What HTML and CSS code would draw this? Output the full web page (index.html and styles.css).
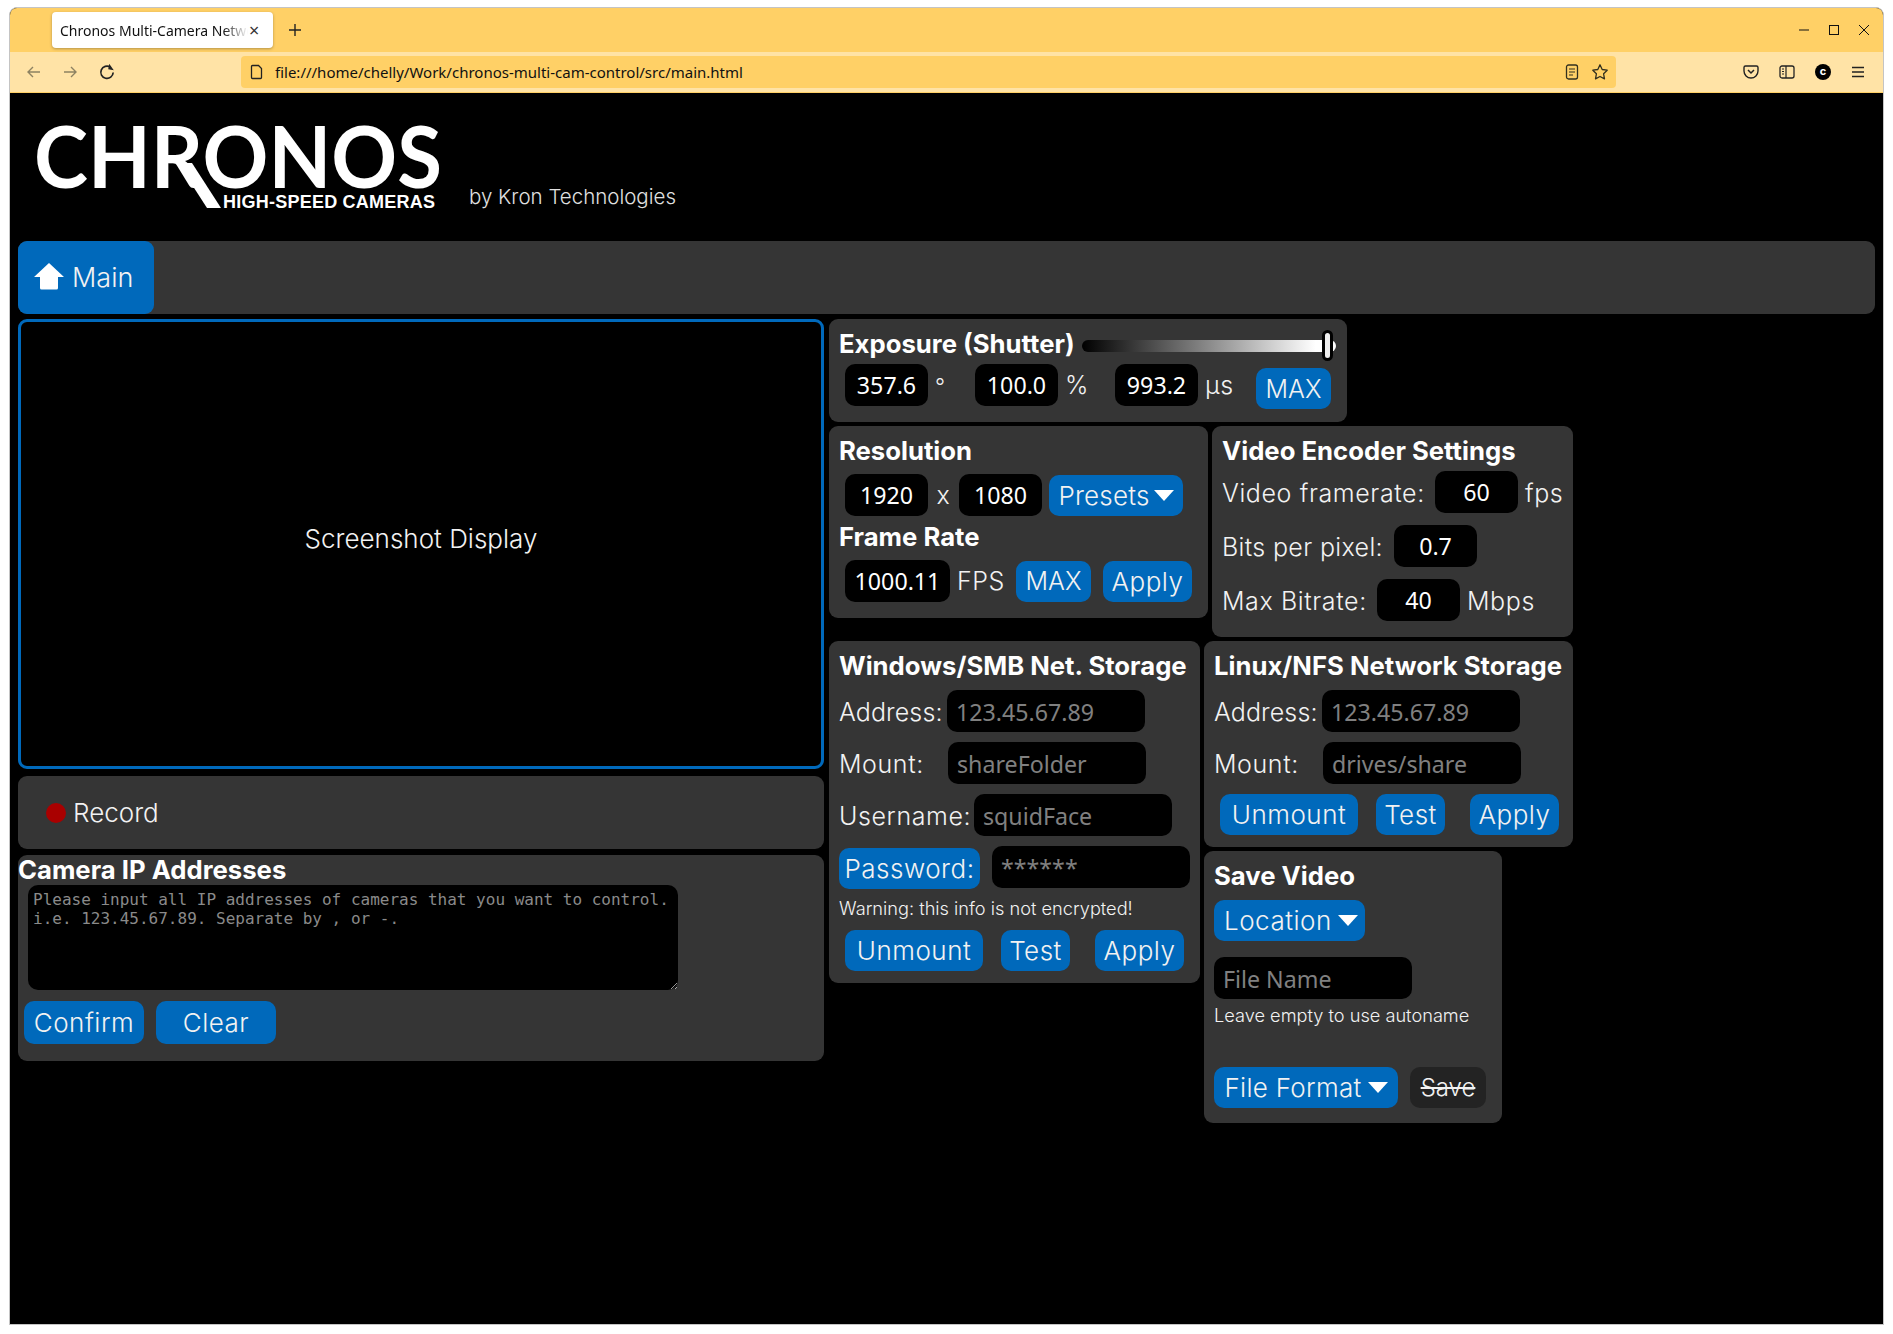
FILE: index.html
```html
<!DOCTYPE html>
<html>
<head>
<meta charset="utf-8">
<title>Chronos Multi-Camera Network Control</title>
<link rel="stylesheet" href="styles.css">
</head>
<body>
<div class="window">

<div class="tabStrip">
	<div class="tab"><span class="tabTitle">Chronos Multi-Camera Network Control</span><span class="tabClose">×</span></div>
	<svg class="newTab" width="14" height="14" viewBox="0 0 14 14"><path d="M7 1v12M1 7h12" stroke="#222" stroke-width="1.4"/></svg>
	<div class="windowControls">
		<svg width="12" height="12" viewBox="0 0 12 12"><path d="M1 6h10" stroke="#111" stroke-width="1"/></svg>
		<svg width="12" height="12" viewBox="0 0 12 12"><rect x="1.5" y="1.5" width="9" height="9" fill="none" stroke="#111"/></svg>
		<svg width="12" height="12" viewBox="0 0 12 12"><path d="M1 1l10 10M11 1L1 11" stroke="#111"/></svg>
	</div>
</div>

<div class="toolbar">
	<div class="navButtons">
		<svg width="16" height="16" viewBox="0 0 16 16"><path d="M14 8H2M7 3L2 8l5 5" fill="none" stroke="#8d8262" stroke-width="1.4"/></svg>
		<svg width="16" height="16" viewBox="0 0 16 16"><path d="M2 8h12M9 3l5 5-5 5" fill="none" stroke="#8d8262" stroke-width="1.4"/></svg>
		<svg width="18" height="18" viewBox="0 0 16 16"><path d="M13.5 8.5A5.5 5.5 0 1 1 11 3.6" fill="none" stroke="#222" stroke-width="1.5"/><path d="M9.5 1v5h5z" fill="#222" transform="rotate(10 12 3.5)"/></svg>
	</div>
	<div class="urlBar">
		<svg width="14" height="16" viewBox="0 0 14 16"><path d="M2.5 1.5h6l3 3v9a1 1 0 0 1-1 1h-8a1 1 0 0 1-1-1v-11a1 1 0 0 1 1-1z" fill="none" stroke="#222" stroke-width="1.3"/></svg>
		<span class="url">file:///home/chelly/Work/chronos-multi-cam-control/src/main.html</span>
		<svg class="urlIcon" width="14" height="16" viewBox="0 0 14 16"><rect x="1.5" y="1" width="11" height="14" rx="2" fill="none" stroke="#33301f" stroke-width="1.3"/><path d="M4 5h6M4 8h6M4 11h4" stroke="#33301f" stroke-width="1.2"/></svg>
		<svg width="18" height="18" viewBox="0 0 18 18"><path d="M9 1.8l2.2 4.7 5 .7-3.6 3.6.9 5.1L9 13.5l-4.5 2.4.9-5.1-3.6-3.6 5-.7z" fill="none" stroke="#33301f" stroke-width="1.3" stroke-linejoin="round"/></svg>
	</div>
	<div class="toolIcons">
		<svg width="16" height="16" viewBox="0 0 16 16"><path d="M2.5 2h11a1.5 1.5 0 0 1 1.5 1.5V7a7 7 0 0 1-14 0V3.500A1.500 1.500 0 0 1 2.500 2z" fill="none" stroke="#222" stroke-width="1.400"/><path d="M5 6l3 3 3-3" fill="none" stroke="#222" stroke-width="1.500"/></svg>
		<svg width="16" height="14" viewBox="0 0 16 14"><rect x="1" y="1" width="14" height="12" rx="2" fill="none" stroke="#222" stroke-width="1.300"/><path d="M7 1v12M3 4h2M3 6.500h2M3 9h2" stroke="#222" stroke-width="1.200"/></svg>
		<span class="avatar">c</span>
		<svg width="14" height="12" viewBox="0 0 14 12"><path d="M1 1.500h12M1 6h12M1 10.500h12" stroke="#222" stroke-width="1.300"/></svg>
	</div>
</div>

<div class="page">

	<div class="header">
		<svg class="logo" width="420" height="100" viewBox="0 0 420 100">
			<text class="logoName" x="0" y="74" textLength="408" lengthAdjust="spacingAndGlyphs">CHRONOS</text>
			<path d="M144 49h14l29 45h-14z" fill="#fff"/>
			<text class="logoSub" x="189" y="94" textLength="212" lengthAdjust="spacing">HIGH-SPEED CAMERAS</text>
		</svg>
		<span class="byline">by Kron Technologies</span>
	</div>

	<div class="navBar">
		<div class="navTab">
			<svg width="30" height="28" viewBox="0 0 30 28"><path d="M15 1L30 15h-6v11a1.500 1.500 0 0 1-1.500 1.500h-15A1.500 1.500 0 0 1 6 26V15H0z" fill="#fff"/></svg>
			<span>Main</span>
		</div>
	</div>

	<div class="columns">

		<div class="leftColumn">
			<div class="screenshot">Screenshot Display</div>
			<div class="recordBar"><span class="recordDot"></span>Record</div>
			<div class="cameraPanel">
				<h2 class="cameraTitle">Camera IP Addresses</h2>
				<textarea class="ipList" placeholder="Please input all IP addresses of cameras that you want to control.&#10;i.e. 123.45.67.89. Separate by , or -."></textarea>
				<div class="cameraButtons">
					<button class="btn wide">Confirm</button>
					<button class="btn wide">Clear</button>
				</div>
			</div>
		</div>

		<div class="rightColumn">

			<div class="panel exposure">
				<div class="titleRow">
					<h2>Exposure (Shutter)</h2>
					<div class="slider"><span class="thumb"></span></div>
				</div>
				<div class="exposureRow">
					<div class="field"><input class="num" value="357.6"><span class="degree">°</span></div>
					<div class="field"><input class="num" value="100.0"><span>%</span></div>
					<div class="field"><input class="num" value="993.2"><span>µs</span></div>
					<button class="btn max">MAX</button>
				</div>
			</div>

			<div class="panelRow">
				<div class="panel resolution">
					<h2>Resolution</h2>
					<div class="row indent">
						<input class="num" value="1920"><span class="times">x</span><input class="num" value="1080">
						<button class="btn presets">Presets<span class="caret"></span></button>
					</div>
					<h2>Frame Rate</h2>
					<div class="row indent">
						<input class="num fps" value="1000.11"><span class="fpsLabel">FPS</span>
						<button class="btn max">MAX</button>
						<button class="btn apply">Apply</button>
					</div>
				</div>

				<div class="panel encoder">
					<h2>Video Encoder Settings</h2>
					<div class="encRow first"><label class="rateLabel">Video framerate:</label><input class="num" value="60"><span>fps</span></div>
					<div class="encRow"><label class="bitsLabel">Bits per pixel:</label><input class="num" value="0.7"></div>
					<div class="encRow"><label class="maxLabel">Max Bitrate:</label><input class="num" value="40"><span>Mbps</span></div>
				</div>
			</div>

			<div class="panelRow">
				<div class="panel smb">
					<h2>Windows/SMB Net. Storage</h2>
					<div class="formRow"><label class="addr">Address:</label><input class="text" placeholder="123.45.67.89"></div>
					<div class="formRow"><label class="mount">Mount:</label><input class="text" placeholder="shareFolder"></div>
					<div class="formRow"><label class="user">Username:</label><input class="text" placeholder="squidFace"></div>
					<div class="formRow pass"><button class="btn">Password:</button><input class="text" placeholder="******"></div>
					<p class="note warn">Warning: this info is not encrypted!</p>
					<div class="storageButtons">
						<button class="btn">Unmount</button>
						<button class="btn">Test</button>
						<button class="btn">Apply</button>
					</div>
				</div>

				<div class="stack">
					<div class="panel nfs">
						<h2>Linux/NFS Network Storage</h2>
						<div class="formRow"><label class="addr">Address:</label><input class="text" placeholder="123.45.67.89"></div>
						<div class="formRow"><label class="mount">Mount:</label><input class="text" placeholder="drives/share"></div>
						<div class="storageButtons nfsButtons">
							<button class="btn">Unmount</button>
							<button class="btn">Test</button>
							<button class="btn">Apply</button>
						</div>
					</div>
					<div class="panel save">
						<h2>Save Video</h2>
						<button class="btn location">Location<span class="caret"></span></button>
						<input class="text fileName" placeholder="File Name">
						<p class="note autoname">Leave empty to use autoname</p>
						<div class="saveButtons">
							<button class="btn format">File Format<span class="caret"></span></button>
							<button class="btn saveOff">Save</button>
						</div>
					</div>
				</div>
			</div>

		</div>
	</div>
</div>
</div>
</body>
</html>
```

FILE: styles.css
```css
* {
	box-sizing: border-box;
}
body {
	margin: 0;
	background-color: white;
	font-family: "Inter", "Liberation Sans", sans-serif;
}
.window {
	margin: 7px 9px 9px 9px;
	height: 1318px;
	border: 1px solid #c4c4c4;
	border-radius: 8px 8px 0 0;
	overflow: hidden;
	background-color: black;
	display: flex;
	flex-direction: column;
}

/* browser chrome */
.tabStrip {
	height: 44px;
	flex: none;
	background-color: #ffd066;
	display: flex;
	align-items: center;
	padding-left: 42px;
	padding-right: 12px;
}
.tab {
	width: 221px;
	height: 36px;
	background-color: white;
	border-radius: 4px;
	box-shadow: 0 1px 3px rgba(0,0,0,0.3);
	display: flex;
	align-items: center;
	padding-left: 8px;
	font-family: "Noto Sans", sans-serif;
	font-size: 14px;
	color: #111;
}
.tabTitle {
	width: 188px;
	white-space: nowrap;
	overflow: hidden;
	-webkit-mask-image: linear-gradient(to right, black 163px, transparent 188px);
	mask-image: linear-gradient(to right, black 163px, transparent 188px);
}
.tabClose {
	font-size: 18px;
	line-height: 18px;
	color: #333;
	margin-left: 1px;
}
.newTab {
	margin-left: 15px;
}
.windowControls {
	margin-left: auto;
	display: flex;
	gap: 18px;
	margin-right: 1px;
}
.toolbar {
	height: 41px;
	flex: none;
	background-color: #ffe3a6;
	border-bottom: 1px solid #ffd066;
	display: flex;
	align-items: center;
}
.navButtons {
	width: 231px;
	display: flex;
	align-items: center;
	gap: 20px;
	padding-left: 16px;
	flex: none;
}
.urlBar {
	width: 1375px;
	height: 32px;
	flex: none;
	background-color: #ffd066;
	border-radius: 4px;
	display: flex;
	align-items: center;
	padding-left: 9px;
	padding-right: 7px;
	gap: 11px;
}
.url {
	font-family: "Noto Sans", sans-serif;
	font-size: 15px;
	color: #111;
	flex: 1;
}
.urlIcon {
	margin-right: 1px;
}
.toolIcons {
	display: flex;
	align-items: center;
	gap: 20px;
	margin-left: 127px;
}
.avatar {
	width: 16px;
	height: 16px;
	border-radius: 50%;
	background-color: black;
	color: white;
	font-size: 11px;
	font-weight: 700;
	line-height: 15px;
	text-align: center;
}

/* page */
.page {
	flex: 1;
	padding: 0 8px;
	color: #f2f2f2;
	font-size: 25px;
	font-weight: 300;
	letter-spacing: 0.6px;
}
.header {
	height: 148px;
	display: flex;
	align-items: flex-start;
}
.logo {
	margin-top: 21px;
	margin-left: 16px;
	flex: none;
	letter-spacing: 0;
}
.logoName {
	font-family: "Lato", sans-serif;
	font-weight: 700;
	font-size: 87px;
	fill: white;
}
.logoSub {
	font-family: "Liberation Sans", sans-serif;
	font-weight: 700;
	font-size: 18px;
	fill: white;
}
.byline {
	margin-left: 15px;
	margin-top: 91px;
	font-size: 20.5px;
	letter-spacing: 0;
	color: #e0e0e0;
}
.navBar {
	height: 73px;
	background-color: #353535;
	border-radius: 9px;
}
.navTab {
	width: 136px;
	height: 73px;
	background-color: #0069bb;
	border-radius: 9px;
	display: flex;
	align-items: center;
	padding-left: 16px;
	gap: 8px;
	font-size: 27px;
	letter-spacing: 0;
}
.navTab svg {
	margin-top: -4px;
}
.columns {
	display: flex;
	align-items: flex-start;
	gap: 5px;
	margin-top: 5px;
}
.leftColumn {
	width: 806px;
	flex: none;
}
.screenshot {
	height: 450px;
	padding-bottom: 12px;
	border: 3px solid #0069bb;
	border-radius: 9px;
	display: flex;
	align-items: center;
	justify-content: center;
	font-size: 26px;
	letter-spacing: 0;
}
.recordBar {
	height: 73px;
	margin-top: 7px;
	background-color: #353535;
	border-radius: 9px;
	display: flex;
	align-items: center;
	padding-left: 28px;
	font-size: 26px;
	letter-spacing: 0;
}
.recordDot {
	width: 20px;
	height: 20px;
	border-radius: 50%;
	background-color: #a90000;
	margin-right: 7px;
}
.cameraPanel {
	height: 206px;
	margin-top: 6px;
	background-color: #353535;
	border-radius: 9px;
}
.cameraTitle {
	height: 30px;
	line-height: 30px;
}
.ipList {
	display: block;
	width: 650px;
	height: 105px;
	margin-left: 10px;
	background-color: black;
	border: 0;
	border-radius: 10px;
	padding: 5px;
	font-family: "DejaVu Sans Mono", monospace;
	font-size: 16px;
	line-height: 19px;
	letter-spacing: 0;
	color: #ddd;
}
.ipList::placeholder {
	color: #8a8a8a;
	opacity: 1;
}
.cameraButtons {
	display: flex;
	gap: 12px;
	margin-left: 6px;
	margin-top: 11px;
}
h2 {
	margin: 0;
	font-size: 25.7px;
	font-weight: 700;
	letter-spacing: 0;
	color: white;
	white-space: nowrap;
}
.btn {
	height: 41px;
	padding: 0 10px;
	background-color: #0069bb;
	color: #f2f2f2;
	border: 0;
	border-radius: 10px;
	font-family: inherit;
	font-size: 26px;
	font-weight: 300;
	letter-spacing: 0.5px;
	white-space: nowrap;
	display: inline-flex;
	align-items: center;
	justify-content: center;
	flex: none;
}
.btn.wide {
	width: 120px;
	height: 43px;
	padding: 0;
}
.btn.max {
	width: 75px;
	padding: 0;
	font-size: 25px;
	letter-spacing: 0;
}
.caret {
	width: 0;
	height: 0;
	margin-left: 6px;
	border-top: 11px solid white;
	border-left: 10px solid transparent;
	border-right: 10px solid transparent;
}
input {
	background-color: black;
	border: 0;
	border-radius: 10px;
	height: 42px;
	font-family: "Noto Sans", sans-serif;
	font-size: 23.2px;
	color: white;
	outline: none;
}
input::placeholder {
	color: #808080;
	opacity: 1;
}
.num {
	width: 83px;
	text-align: center;
	padding: 0;
}
.text {
	width: 198px;
	padding: 2px 9px 0 9px;
}

/* right side panels */
.rightColumn {
	display: flex;
	flex-direction: column;
	gap: 4px;
}
.panelRow {
	display: flex;
	align-items: flex-start;
	gap: 4px;
}
.panel {
	background-color: #353535;
	border-radius: 9px;
	padding-left: 10px;
}
.panel h2 {
	line-height: 36px;
}
.exposure {
	width: 518px;
	height: 103px;
}
.titleRow {
	height: 34px;
	margin-top: 8px;
	display: flex;
	align-items: center;
	position: relative;
	padding-top: 8px;
}
.titleRow h2 {
	margin-top: -9px;
}
.slider {
	position: absolute;
	left: 243px;
	top: 13px;
	width: 254px;
	height: 12px;
	border-radius: 6px;
	background: linear-gradient(to right, black, white 92%);
}
.thumb {
	position: absolute;
	right: 3px;
	top: -10px;
	width: 11px;
	height: 31px;
	background-color: #eee;
	border: 3px solid black;
	border-radius: 6px;
}
.exposureRow {
	display: grid;
	grid-template-columns: 130px 140px 141px auto;
	margin-top: 3px;
	margin-left: 6px;
	align-items: start;
	justify-items: start;
}
.exposureRow .btn {
	margin-top: 4px;
}
.field {
	display: flex;
	align-items: center;
	gap: 7px;
	height: 42px;
}
.degree {
	margin-top: 2px;
	font-size: 22px;
}
.resolution {
	width: 379px;
	height: 192px;
}
.resolution h2 {
	height: 34px;
	padding-top: 7px;
	box-sizing: content-box;
}
.row {
	display: flex;
	align-items: center;
}
.resolution h2 + .row {
	margin-top: 7px;
}
.resolution .row + h2 {
	padding-top: 3px;
}
.indent {
	margin-left: 6px;
}
.times {
	width: 31px;
	text-align: center;
}
.presets {
	width: 134px;
	padding: 0;
	margin-left: 7px;
	letter-spacing: 0.2px;
}
.presets .caret {
	margin-left: 4px;
}
.fps {
	width: 105px;
}
.fpsLabel {
	margin-left: 7px;
	width: 59px;
}
.apply {
	width: 89px;
	padding: 0;
	margin-left: 12px;
}
.encoder {
	width: 361px;
	height: 211px;
}
.encoder h2 {
	height: 34px;
	margin-top: 7px;
}
.encRow {
	display: flex;
	align-items: center;
	gap: 7px;
	margin-top: 12px;
}
.encRow.first {
	margin-top: 4px;
}
.encRow label,
.encRow span {
	flex: none;
	margin-top: 2px;
}
.rateLabel {
	width: 206px;
}
.bitsLabel {
	width: 165px;
	letter-spacing: 0.35px;
}
.maxLabel {
	width: 148px;
}
.smb {
	width: 371px;
	height: 342px;
}
.stack {
	display: flex;
	flex-direction: column;
	gap: 4px;
}
.nfs {
	width: 369px;
	height: 206px;
}
.smb h2,
.nfs h2,
.save h2 {
	height: 34px;
	margin-top: 7px;
}
.formRow {
	display: flex;
	align-items: center;
	margin-bottom: 10px;
}
.formRow label {
	margin-top: 2px;
}
.smb h2 + .formRow,
.nfs h2 + .formRow {
	margin-top: 8px;
}
.addr {
	width: 108px;
	letter-spacing: 0.1px;
}
.mount {
	width: 109px;
}
.user {
	width: 135px;
}
.pass {
	margin-bottom: 0;
	align-items: flex-start;
}
.pass .btn {
	width: 141px;
	padding: 0;
	margin-top: 2px;
	margin-right: 12px;
}
.note {
	margin: 0;
	font-size: 18.2px;
	line-height: 22px;
	letter-spacing: 0;
}
.warn {
	margin-top: 8px;
}
.storageButtons {
	display: flex;
	margin-top: 11px;
	margin-left: 6px;
}
.storageButtons .btn {
	padding: 0;
}
.storageButtons .btn:nth-child(1) {
	width: 138px;
}
.storageButtons .btn:nth-child(2) {
	width: 69px;
	margin-left: 18px;
}
.storageButtons .btn:nth-child(3) {
	width: 89px;
	margin-left: 25px;
}
.nfsButtons {
	margin-top: 0;
}
.save {
	width: 298px;
	height: 272px;
}
.location {
	display: flex;
	justify-content: flex-start;
	width: 151px;
	margin-top: 8px;
}
.fileName {
	display: block;
	margin-top: 16px;
}
.autoname {
	margin-top: 5px;
}
.saveButtons {
	display: flex;
	gap: 12px;
	margin-top: 41px;
}
.format {
	width: 184px;
	padding: 0;
	letter-spacing: 0.3px;
}
.saveOff {
	width: 76px;
	padding: 0;
	font-size: 24px;
	letter-spacing: 0;
	background-color: #232323;
	text-decoration: line-through;
}
```
